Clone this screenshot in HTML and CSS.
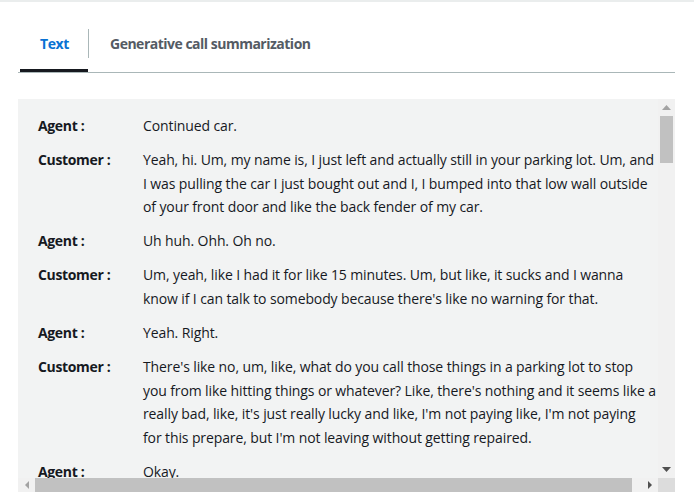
FILE: index.html
```html
<!DOCTYPE html>
<html>
<head>
<meta charset="utf-8">
<link rel="stylesheet" href="styles.css">
</head>
<body>
<div class="topline"></div>
<div class="wrap">
  <div class="tabs">
    <div class="tab active"><span>Text</span></div>
    <div class="sep"></div>
    <div class="tab"><span>Generative call summarization</span></div>
  </div>
  <div class="panel">
    <div class="viewport">
      <div class="rows">
        <div class="row"><div class="who">Agent :</div><div class="said">Continued car.</div></div>
        <div class="row"><div class="who">Customer :</div><div class="said">Yeah, hi. Um, my name is, I just left and actually still in your parking lot. Um, and<br>I was pulling the car I just bought out and I, I bumped into that low wall outside<br>of your front door and like the back fender of my car.</div></div>
        <div class="row"><div class="who">Agent :</div><div class="said">Uh huh. Ohh. Oh no.</div></div>
        <div class="row"><div class="who">Customer :</div><div class="said">Um, yeah, like I had it for like 15 minutes. Um, but like, it sucks and I wanna<br>know if I can talk to somebody because there's like no warning for that.</div></div>
        <div class="row"><div class="who">Agent :</div><div class="said">Yeah. Right.</div></div>
        <div class="row"><div class="who">Customer :</div><div class="said">There's like no, um, like, what do you call those things in a parking lot to stop<br>you from like hitting things or whatever? Like, there's nothing and it seems like a<br>really bad, like, it's just really lucky and like, I'm not paying like, I'm not paying<br>for this prepare, but I'm not leaving without getting repaired.</div></div>
        <div class="row"><div class="who">Agent :</div><div class="said">Okay.</div></div>
      </div>
    </div>
    <div class="vbar">
      <div class="btn"><svg width="9" height="5" viewBox="0 0 9 5"><polygon points="0,5 9,5 4.5,0" fill="#a3a3a3"/></svg></div>
      <div class="vtrack"><div class="vthumb"></div></div>
      <div class="btn"><svg width="9" height="5" viewBox="0 0 9 5"><polygon points="0,0 9,0 4.5,5" fill="#505050"/></svg></div>
    </div>
    <div class="hbar">
      <div class="hbtn"><svg width="4" height="8" viewBox="0 0 4 8"><polygon points="4,0 4,8 0,4" fill="#a3a3a3"/></svg></div>
      <div class="htrack"><div class="hthumb"></div></div>
      <div class="hbtn"><svg width="4" height="8" viewBox="0 0 4 8"><polygon points="0,0 0,8 4,4" fill="#505050"/></svg></div>
    </div>
    <div class="corner"></div>
  </div>
</div>
</body>
</html>
```
FILE: styles.css
```css
html, body {
  margin: 0;
  padding: 0;
  background: #ffffff;
  font-family: "Open Sans", "Noto Sans", sans-serif;
  color: #16191f;
}
.topline {
  height: 2px;
  background: #eaeded;
}
.wrap {
  margin: 0 19px 0 18px;
}
.tabs {
  display: flex;
  align-items: center;
  border-bottom: 1px solid #aab7b8;
  margin-top: 27px;
  height: 43px;
  padding-left: 2px;
}
.tab {
  height: 100%;
  display: flex;
  align-items: center;
  padding: 0 21px 0 21px;
  box-sizing: border-box;
  font-size: 14px;
  font-weight: 700;
  color: #545b64;
  letter-spacing: -0.5px;
}
.tab span {
  margin-top: -14px;
}
.tab.active {
  color: #0972d3;
  width: 68px;
  padding-left: 20px;
  border-bottom: 3px solid #16191f;
  padding-top: 3px;
  letter-spacing: -0.4px;
}
.sep {
  width: 1px;
  height: 29px;
  background: #aab7b8;
  align-self: flex-start;
}
.panel {
  margin-top: 26px;
  height: 393px;
  background: #f2f3f3;
  display: grid;
  grid-template-columns: 1fr 17px;
  grid-template-rows: 1fr 14px;
}
.viewport {
  overflow: hidden;
}
.rows {
  padding: 15px 0 0 20px;
  display: flex;
  flex-direction: column;
  gap: 10.5px;
}
.row {
  display: flex;
  font-size: 14px;
  line-height: 23.6px;
}
.who {
  width: 105px;
  flex: none;
  font-weight: 700;
  letter-spacing: -0.35px;
}
.said {
  white-space: nowrap;
  letter-spacing: -0.11px;
}
.vbar {
  display: flex;
  flex-direction: column;
  background: #f1f1f1;
}
.btn {
  height: 17px;
  display: flex;
  align-items: center;
  justify-content: center;
}
.vtrack {
  flex: 1;
  padding: 0 2px;
}
.vthumb {
  height: 47px;
  background: #c1c1c1;
}
.hbar {
  display: flex;
  background: #f1f1f1;
}
.hbtn {
  width: 17px;
  display: flex;
  align-items: center;
  justify-content: center;
}
.htrack {
  flex: 1;
}
.hthumb {
  width: 597px;
  height: 14px;
  background: #c1c1c1;
}
.corner {
  background: #dcdcdc;
}
```
